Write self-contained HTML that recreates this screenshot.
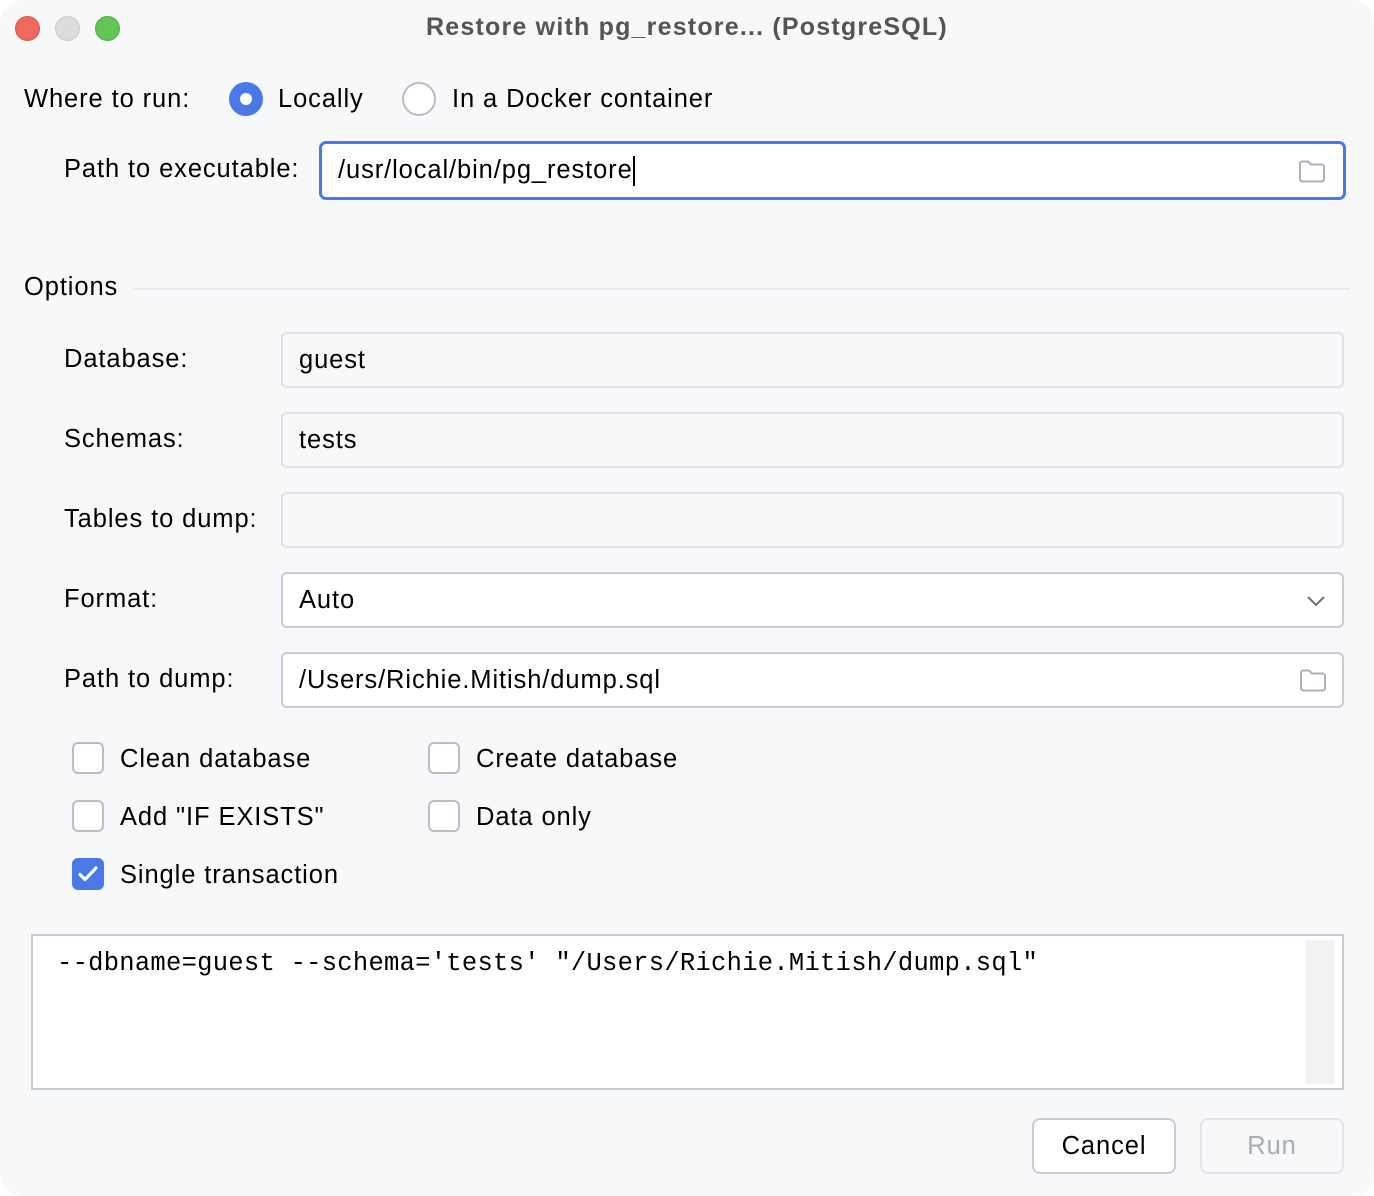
<!DOCTYPE html>
<html><head><meta charset="utf-8">
<style>
*{box-sizing:border-box;margin:0;padding:0}
html,body{width:1374px;height:1196px;background:#fff;overflow:hidden}
body{font-family:"Liberation Sans",sans-serif;color:#000;font-size:25.5px;letter-spacing:0.9px}
#win{position:absolute;left:0;top:0;width:1374px;height:1196px;background:#f7f8fa;border-radius:22px;overflow:hidden}
.a{position:absolute;white-space:nowrap}
.lbl{position:absolute;white-space:nowrap;line-height:30px}
.tl{position:absolute;top:16px;width:25px;height:25px;border-radius:50%}
.fld{position:absolute;border:2px solid #dfe1e5;border-radius:6px;background:#f7f8fa}
.fld.w{background:#fff;border-color:#c9ccd6}
.fld .t{position:absolute;left:16px;top:0;bottom:0;display:flex;align-items:center}
.cb{position:absolute;width:32px;height:32px;border:2px solid #b9bcc6;border-radius:6px;background:#fff}
.btn{position:absolute;border:2px solid #c9ccd6;border-radius:8px;background:#fff;display:flex;align-items:center;justify-content:center}
</style></head><body>
<div id="win">
<div class="tl" style="left:15px;background:#ee6a5f;border:1px solid #d9574d"></div>
<div class="tl" style="left:55px;background:#dcdcdc;border:1px solid #c8c8c8"></div>
<div class="tl" style="left:95px;background:#62c554;border:1px solid #52ae45"></div>
<div class="lbl" style="left:0;width:1374px;text-align:center;top:12px;font-weight:bold;color:#545454;font-size:25px;letter-spacing:1.2px">Restore with pg_restore... (PostgreSQL)</div>

<div class="lbl" style="left:24px;top:84px">Where to run:</div>
<div class="a" style="left:229px;top:82px;width:34px;height:34px;border-radius:50%;background:#4a78e6"><div style="position:absolute;left:11px;top:11px;width:12px;height:12px;border-radius:50%;background:#fff"></div></div>
<div class="lbl" style="left:278px;top:84px">Locally</div>
<div class="a" style="left:402px;top:82px;width:34px;height:34px;border-radius:50%;background:#fff;border:2px solid #b9bcc6"></div>
<div class="lbl" style="left:452px;top:84px">In a Docker container</div>

<div class="lbl" style="left:64px;top:154px">Path to executable:</div>
<div class="fld w" style="left:319px;top:141px;width:1027px;height:59px;border:3px solid #4a78e6;border-radius:7px">
 <div class="t" style="left:16px">/usr/local/bin/pg_restore<span style="display:inline-block;width:2px;height:30px;background:#000;margin-left:0"></span></div>
 <svg class="a" style="right:16px;top:14px" width="30" height="26" viewBox="0 0 30 26"><path d="M3 5.5a2 2 0 0 1 2-2h6l3 3h11a2 2 0 0 1 2 2v13a2 2 0 0 1-2 2H5a2 2 0 0 1-2-2z" fill="none" stroke="#aeb1bd" stroke-width="2"/></svg>
</div>

<div class="lbl" style="left:24px;top:272px">Options</div>
<div class="a" style="left:132px;top:288px;width:1218px;height:2px;background:#e8e9ec"></div>

<div class="lbl" style="left:64px;top:344px">Database:</div>
<div class="fld" style="left:281px;top:332px;width:1063px;height:56px"><div class="t">guest</div></div>
<div class="lbl" style="left:64px;top:424px">Schemas:</div>
<div class="fld" style="left:281px;top:412px;width:1063px;height:56px"><div class="t">tests</div></div>
<div class="lbl" style="left:64px;top:504px">Tables to dump:</div>
<div class="fld" style="left:281px;top:492px;width:1063px;height:56px"></div>
<div class="lbl" style="left:64px;top:584px">Format:</div>
<div class="fld w" style="left:281px;top:572px;width:1063px;height:56px"><div class="t">Auto</div>
 <svg class="a" style="right:16px;top:20px" width="20" height="14" viewBox="0 0 20 14"><path d="M2 3l8 8 8-8" fill="none" stroke="#6c707e" stroke-width="2"/></svg></div>
<div class="lbl" style="left:64px;top:664px">Path to dump:</div>
<div class="fld w" style="left:281px;top:652px;width:1063px;height:56px"><div class="t">/Users/Richie.Mitish/dump.sql</div>
 <svg class="a" style="right:14px;top:13px" width="30" height="26" viewBox="0 0 30 26"><path d="M3 5.5a2 2 0 0 1 2-2h6l3 3h11a2 2 0 0 1 2 2v13a2 2 0 0 1-2 2H5a2 2 0 0 1-2-2z" fill="none" stroke="#aeb1bd" stroke-width="2"/></svg></div>

<div class="cb" style="left:72px;top:742px"></div><div class="lbl" style="left:120px;top:744px">Clean database</div>
<div class="cb" style="left:428px;top:742px"></div><div class="lbl" style="left:476px;top:744px">Create database</div>
<div class="cb" style="left:72px;top:800px"></div><div class="lbl" style="left:120px;top:802px">Add "IF EXISTS"</div>
<div class="cb" style="left:428px;top:800px"></div><div class="lbl" style="left:476px;top:802px">Data only</div>
<div class="cb" style="left:72px;top:858px;background:#4a78e6;border-color:#4a78e6"><svg class="a" style="left:2px;top:3px" width="24" height="22" viewBox="0 0 24 22"><path d="M4 11.5l5 5L20 5" fill="none" stroke="#fff" stroke-width="3.2" stroke-linecap="round" stroke-linejoin="round"/></svg></div>
<div class="lbl" style="left:120px;top:860px">Single transaction</div>

<div class="a" style="left:31px;top:934px;width:1313px;height:156px;background:#fff;border:2px solid #c9ccd6">
 <div class="a" style="left:24px;top:12px;font-family:'Liberation Mono',monospace;font-size:25.5px;line-height:32px;letter-spacing:0.27px">--dbname=guest --schema='tests' "/Users/Richie.Mitish/dump.sql"</div>
 <div class="a" style="left:1273px;top:4px;width:28px;height:144px;background:#f2f2f2"></div>
</div>

<div class="btn" style="left:1032px;top:1118px;width:144px;height:56px">Cancel</div>
<div class="btn" style="left:1200px;top:1118px;width:144px;height:56px;border-color:#e1e3e8;background:#f7f8fa;color:#a9acb8">Run</div>
</div>
</body></html>
